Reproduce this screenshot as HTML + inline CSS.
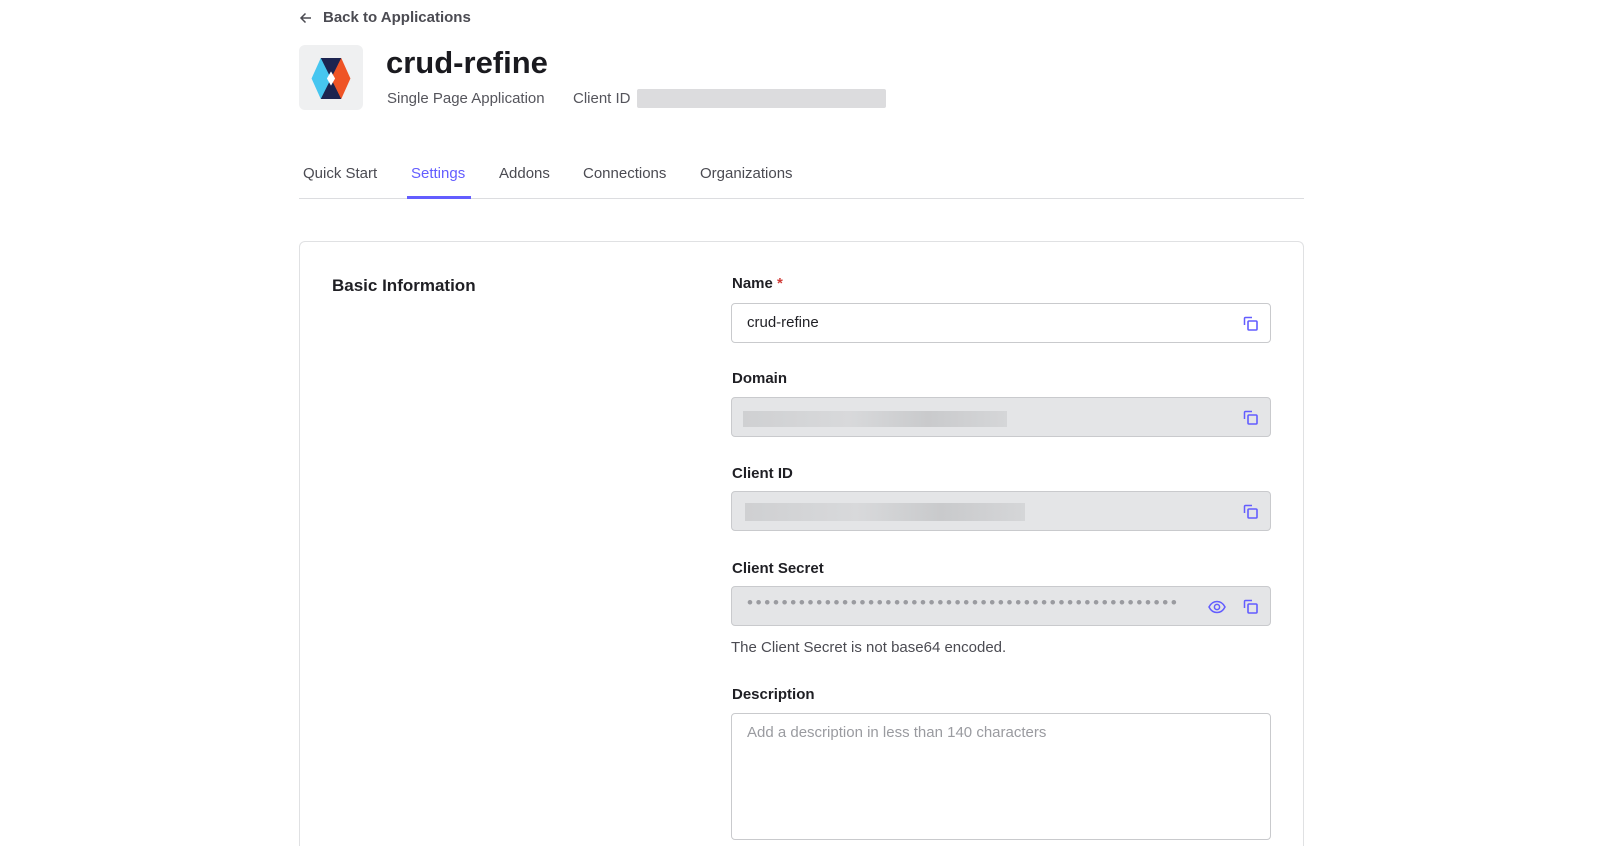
<!DOCTYPE html>
<html style="width:1612px;height:846px;overflow:hidden"><head><style>
*{box-sizing:border-box;margin:0;padding:0}
body{width:1612px;height:846px;overflow:hidden;background:#fff;font-family:"Liberation Sans",Arial,sans-serif;color:#1f1f24;position:relative}
.a{position:absolute}
.lbl{position:absolute;left:732px;font-size:15px;font-weight:bold;color:#1f1f24}
.inp{position:absolute;left:731px;width:540px;height:40px;border:1px solid #c9cacd;border-radius:4px}
.gray{background:#e4e5e7}
.bar{position:absolute;height:16px;background:linear-gradient(90deg,#cfd0d2,#d8d9db 40%,#c9cacc 70%,#d5d6d8)}
.cp{position:absolute;right:11px;top:11px}
.tab{position:absolute;top:165px;font-size:15px;color:#4b4b52}
</style></head><body>
<svg class="a" style="left:299px;top:11px" width="14" height="14" viewBox="0 0 14 14"><path d="M12 7H2M6.5 2.5L2 7l4.5 4.5" fill="none" stroke="#4b4b52" stroke-width="1.5"/></svg>
<div class="a" style="left:323px;top:9px;font-size:15px;font-weight:bold;color:#4b4b52">Back to Applications</div>
<div class="a" style="left:299px;top:45px;width:64px;height:65px;background:#eff0f1;border-radius:6px"></div>
<svg class="a" style="left:309px;top:56px" width="44" height="45" viewBox="0 0 42 44">
<polygon points="11,2 21,2 21,22 10,22 2,22" fill="#46c6f0"/>
<polygon points="21,2 31,2 40,22 21,22" fill="#ef5426"/>
<polygon points="2,22 21,22 21,42 11,42" fill="#46c6f0"/>
<polygon points="21,22 40,22 31,42 21,42" fill="#ef5426"/>
<polygon points="11,2 31,2 21,22" fill="#1c2450"/>
<polygon points="11,42 31,42 21,22" fill="#1c2450"/>
<polygon points="21,15 25,22 21,29 17,22" fill="#fff"/>
</svg>
<div class="a" style="left:386px;top:45px;font-size:31px;font-weight:bold;color:#1a1a1f">crud-refine</div>
<div class="a" style="left:387px;top:90px;font-size:15px;color:#55555c">Single Page Application</div>
<div class="a" style="left:573px;top:90px;font-size:15px;color:#55555c">Client ID</div>
<div class="a" style="left:637px;top:89px;width:249px;height:19px;background:#dcdcde;border-radius:2px"></div>
<div class="tab" style="left:303px">Quick Start</div>
<div class="tab" style="left:411px;color:#635dff">Settings</div>
<div class="tab" style="left:499px">Addons</div>
<div class="tab" style="left:583px">Connections</div>
<div class="tab" style="left:700px">Organizations</div>
<div class="a" style="left:299px;top:198px;width:1005px;height:1px;background:#dcdde0"></div>
<div class="a" style="left:407px;top:196px;width:64px;height:3px;background:#635dff"></div>
<div class="a" style="left:299px;top:241px;width:1005px;height:605px;border:1px solid #e0e1e3;border-bottom:none;border-radius:6px 6px 0 0"></div>
<div class="a" style="left:332px;top:276px;font-size:17px;font-weight:bold">Basic Information</div>

<div class="lbl" style="top:275px">Name <span style="color:#d03c38">*</span></div>
<div class="inp" style="top:303px"><div class="a" style="left:15px;top:10px;font-size:15px">crud-refine</div>
<svg class="cp" width="17" height="17" viewBox="0 0 17 17"><path d="M10 2.5H3.5a1 1 0 0 0-1 1V10" fill="none" stroke="#635dff" stroke-width="1.5"/><rect x="6" y="6" width="9" height="9" rx="1" fill="none" stroke="#635dff" stroke-width="1.6"/></svg></div>

<div class="lbl" style="top:370px">Domain</div>
<div class="inp gray" style="top:397px"><div class="bar" style="left:11px;top:13px;width:264px"></div>
<svg class="cp" width="17" height="17" viewBox="0 0 17 17"><path d="M10 2.5H3.5a1 1 0 0 0-1 1V10" fill="none" stroke="#635dff" stroke-width="1.5"/><rect x="6" y="6" width="9" height="9" rx="1" fill="none" stroke="#635dff" stroke-width="1.6"/></svg></div>

<div class="lbl" style="top:465px">Client ID</div>
<div class="inp gray" style="top:491px"><div class="bar" style="left:13px;top:11px;width:280px;height:18px"></div>
<svg class="cp" width="17" height="17" viewBox="0 0 17 17"><path d="M10 2.5H3.5a1 1 0 0 0-1 1V10" fill="none" stroke="#635dff" stroke-width="1.5"/><rect x="6" y="6" width="9" height="9" rx="1" fill="none" stroke="#635dff" stroke-width="1.6"/></svg></div>

<div class="lbl" style="top:560px">Client Secret</div>
<div class="inp gray" style="top:586px"><div class="a" style="left:15px;top:6px;font-size:17px;color:#9a9ba0;letter-spacing:2.7px;white-space:nowrap;overflow:hidden;width:430px">•••••••••••••••••••••••••••••••••••••••••••••••••••••</div>
<svg class="a" style="right:44px;top:12px" width="18" height="16" viewBox="0 0 18 16"><path d="M1 8C3 4 6 2.5 9 2.5S15 4 17 8c-2 4-5 5.5-8 5.5S3 12 1 8z" fill="none" stroke="#635dff" stroke-width="1.5"/><circle cx="9" cy="8" r="2.6" fill="none" stroke="#635dff" stroke-width="1.5"/></svg>
<svg class="cp" width="17" height="17" viewBox="0 0 17 17"><path d="M10 2.5H3.5a1 1 0 0 0-1 1V10" fill="none" stroke="#635dff" stroke-width="1.5"/><rect x="6" y="6" width="9" height="9" rx="1" fill="none" stroke="#635dff" stroke-width="1.6"/></svg></div>
<div class="a" style="left:731px;top:639px;font-size:15px;color:#4b4b52">The Client Secret is not base64 encoded.</div>

<div class="lbl" style="top:686px">Description</div>
<div class="inp" style="top:713px;height:127px"><div class="a" style="left:15px;top:10px;font-size:15px;color:#9a9ba0">Add a description in less than 140 characters</div></div>
</body></html>
